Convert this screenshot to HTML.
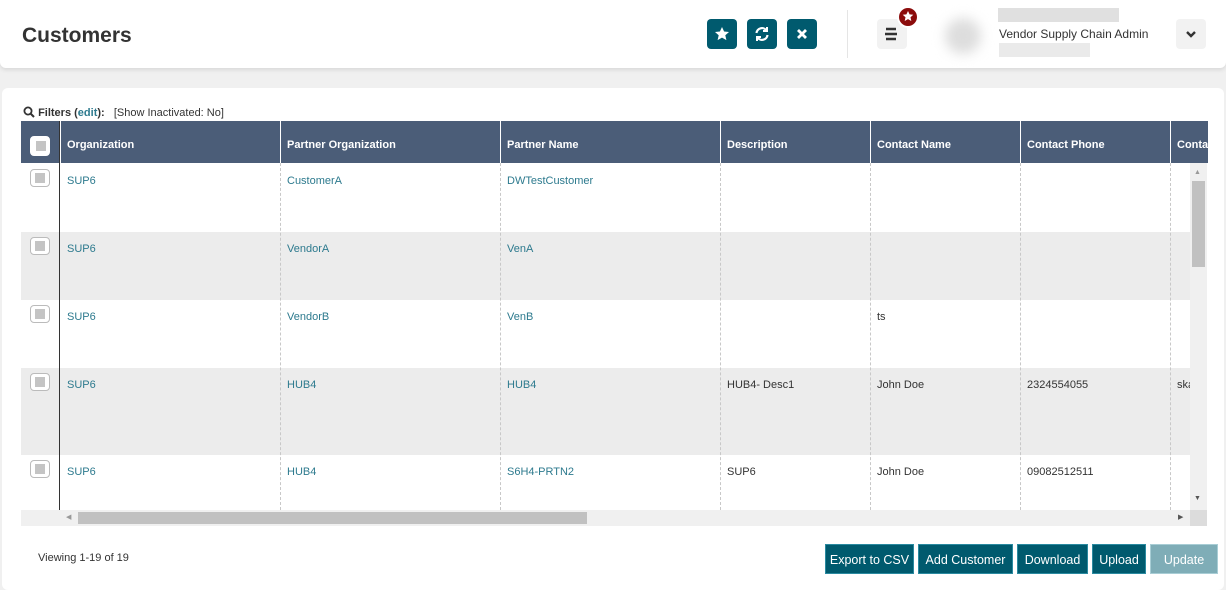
<!DOCTYPE html>
<html><head><style>
*{box-sizing:border-box;margin:0;padding:0}
body{width:1226px;height:590px;background:#f0f0f0;font-family:"Liberation Sans",sans-serif;position:relative;overflow:hidden;font-size:11px;color:#333}
.a{position:absolute}
.hdr{left:0;top:0;width:1226px;height:68px;background:#fff;box-shadow:0 2px 4px rgba(0,0,0,.1);border-radius:0 0 6px 6px}
.ib{width:30px;height:30px;background:#005a6e;border-radius:4px;top:19px}
.card{left:2px;top:88px;width:1222px;height:502px;background:#fff;border-radius:6px}
.th{top:121px;height:42px;background:#4b5d78;color:#fff;font-weight:bold;font-size:11px;line-height:48px;padding-left:6px;border-left:1px solid #fff;overflow:hidden;white-space:nowrap}
.row{left:21px;width:1169px}
.cell{font-size:11px;color:#2d7a8e;padding-left:6px}
.blk{color:#333}
.vl{top:163px;height:347px;border-left:1px dashed #c8c8c8}
.cb{width:20px;height:18px;border:1px solid #bbb;border-radius:4px;background:#fff}
.cb:after{content:"";position:absolute;left:4px;top:3px;width:10px;height:10px;background:#c4c4c4}
.btn{top:544px;height:30px;background:#005a6e;color:#fff;font-size:12.5px;line-height:30px;text-align:center;border:1px solid #2a8aa0}
</style></head><body>
<div class="a hdr"></div>
<div class="a" style="left:22px;top:24px;font-size:21px;font-weight:bold;color:#333">Customers</div>
<div class="a ib" style="left:707px"><svg width="30" height="30"><path d="M15 8l2.1 4.5 4.9.5-3.7 3.3 1.1 4.8L15 18.6 10.6 21.1l1.1-4.8L8 13l4.9-.5z" fill="#fff"/></svg></div>
<div class="a ib" style="left:747px"><svg width="30" height="30" fill="none" stroke="#fff" stroke-width="2.2"><path d="M9.5 14a5.5 5.5 0 0 1 10-2.5M20.5 16a5.5 5.5 0 0 1-10 2.5"/><path d="M20 8v4h-4M10 22v-4h4" stroke-width="2"/></svg></div>
<div class="a ib" style="left:787px"><svg width="30" height="30" stroke="#fff" stroke-width="2.8"><path d="M11 11l8 8M19 11l-8 8"/></svg></div>
<div class="a" style="left:847px;top:10px;width:1px;height:48px;background:#e5e5e5"></div>
<div class="a" style="left:877px;top:19px;width:30px;height:30px;background:#f2f2f2;border-radius:4px"><svg width="30" height="30"><path d="M9 10h10M8 15h12M9 20h10" stroke="#333" stroke-width="2.5"/></svg></div>
<div class="a" style="left:897px;top:6px;width:22px;height:22px;border-radius:50%;background:#8b0c0c;border:2px solid #fff"><svg width="18" height="18"><path d="M9 3l1.6 3.4 3.7.4-2.8 2.5.8 3.7L9 11.1 5.7 13l.8-3.7L3.7 6.8l3.7-.4z" fill="#fff"/></svg></div>
<div class="a" style="left:945px;top:18px;width:36px;height:36px;border-radius:50%;background:#ddd;filter:blur(6px)"></div>
<div class="a" style="left:998px;top:8px;width:121px;height:14px;background:#e0e0e0"></div>
<div class="a" style="left:999px;top:27px;font-size:12px;color:#333">Vendor Supply Chain Admin</div>
<div class="a" style="left:999px;top:43px;width:91px;height:14px;background:#eaeaea"></div>
<div class="a" style="left:1176px;top:19px;width:30px;height:30px;background:#f2f2f2;border-radius:4px"><svg width="30" height="30"><path d="M11 13l4 4 4-4" stroke="#333" stroke-width="2.4" fill="none"/></svg></div>
<div class="a card"></div>
<div class="a" style="left:23px;top:106px;font-size:11px"><svg width="12" height="12" style="vertical-align:-2px"><circle cx="5" cy="5" r="3.6" stroke="#333" stroke-width="1.8" fill="none"/><path d="M7.5 7.5l3.5 3.5" stroke="#333" stroke-width="2"/></svg> <b>Filters (<span style="color:#2d7a8e">edit</span>):</b> &nbsp;&nbsp;[Show Inactivated: No]</div>
<div class="a" style="left:21px;top:121px;width:39px;height:42px;background:#4b5d78"></div>
<div class="a cb" style="left:30px;top:136px;border:2px solid #fff;height:20px"></div>
<div class="a th" style="left:60px;width:220px">Organization</div>
<div class="a th" style="left:280px;width:220px">Partner Organization</div>
<div class="a th" style="left:500px;width:220px">Partner Name</div>
<div class="a th" style="left:720px;width:150px">Description</div>
<div class="a th" style="left:870px;width:150px">Contact Name</div>
<div class="a th" style="left:1020px;width:150px">Contact Phone</div>
<div class="a th" style="left:1170px;width:38px">Conta</div>
<div class="a row" style="top:232px;height:68px;background:#ececec"></div>
<div class="a row" style="top:368px;height:87px;background:#ececec"></div>
<div class="a" style="left:59px;top:121px;height:389px;border-left:1px solid #333"></div>
<div class="a vl" style="left:280px"></div><div class="a vl" style="left:500px"></div><div class="a vl" style="left:720px"></div><div class="a vl" style="left:870px"></div><div class="a vl" style="left:1020px"></div><div class="a vl" style="left:1170px"></div>
<div class="a cb" style="left:30px;top:169px"></div><div class="a cb" style="left:30px;top:237px"></div><div class="a cb" style="left:30px;top:305px"></div><div class="a cb" style="left:30px;top:373px"></div><div class="a cb" style="left:30px;top:460px"></div>
<div class="a cell" style="left:61px;top:175px">SUP6</div><div class="a cell" style="left:281px;top:175px">CustomerA</div><div class="a cell" style="left:501px;top:175px">DWTestCustomer</div>
<div class="a cell" style="left:61px;top:243px">SUP6</div><div class="a cell" style="left:281px;top:243px">VendorA</div><div class="a cell" style="left:501px;top:243px">VenA</div>
<div class="a cell" style="left:61px;top:311px">SUP6</div><div class="a cell" style="left:281px;top:311px">VendorB</div><div class="a cell" style="left:501px;top:311px">VenB</div><div class="a cell blk" style="left:871px;top:311px">ts</div>
<div class="a cell" style="left:61px;top:379px">SUP6</div><div class="a cell" style="left:281px;top:379px">HUB4</div><div class="a cell" style="left:501px;top:379px">HUB4</div><div class="a cell blk" style="left:721px;top:379px">HUB4- Desc1</div><div class="a cell blk" style="left:871px;top:379px">John Doe</div><div class="a cell blk" style="left:1021px;top:379px">2324554055</div><div class="a cell blk" style="left:1171px;top:379px;width:19px;overflow:hidden">ska</div>
<div class="a cell" style="left:61px;top:466px">SUP6</div><div class="a cell" style="left:281px;top:466px">HUB4</div><div class="a cell" style="left:501px;top:466px">S6H4-PRTN2</div><div class="a cell blk" style="left:721px;top:466px">SUP6</div><div class="a cell blk" style="left:871px;top:466px">John Doe</div><div class="a cell blk" style="left:1021px;top:466px">09082512511</div>
<div class="a" style="left:1190px;top:163px;width:17px;height:347px;background:#f0f0f0"></div>
<div class="a" style="left:1192px;top:181px;width:13px;height:86px;background:#c1c1c1"></div>
<div class="a" style="left:1194px;top:169px;font-size:7px;color:#999">▲</div>
<div class="a" style="left:1194px;top:495px;font-size:7px;color:#555">▼</div>
<div class="a" style="left:21px;top:510px;width:1169px;height:16px;background:#f0f0f0"></div>
<div class="a" style="left:78px;top:512px;width:509px;height:12px;background:#c1c1c1"></div>
<div class="a" style="left:66px;top:513px;font-size:7px;color:#999">◀</div>
<div class="a" style="left:1178px;top:513px;font-size:7px;color:#555">▶</div>
<div class="a" style="left:1190px;top:510px;width:17px;height:16px;background:#dcdcdc"></div>
<div class="a" style="left:38px;top:552px;font-size:11px">Viewing 1-19 of 19</div>
<div class="a btn" style="left:825px;width:89px">Export to CSV</div>
<div class="a btn" style="left:918px;width:95px">Add Customer</div>
<div class="a btn" style="left:1017px;width:71px">Download</div>
<div class="a btn" style="left:1092px;width:54px">Upload</div>
<div class="a btn" style="left:1150px;width:68px;background:#7fadb7;border-color:#a8cdd5">Update</div>
</body></html>
